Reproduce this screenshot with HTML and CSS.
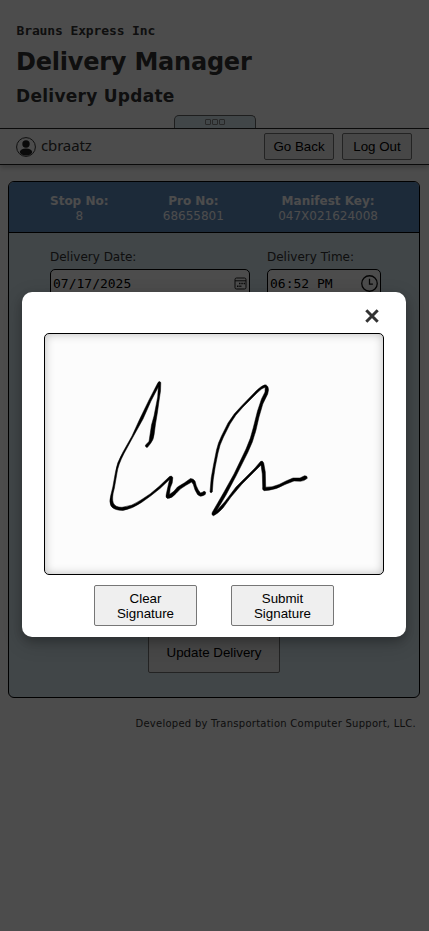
FILE: index.html
```html
<!DOCTYPE html>
<html lang="en">
<head>
<meta charset="utf-8">
<title>Delivery Manager</title>
<link rel="stylesheet" href="styles.css">
</head>
<body>
<header class="header">
  <div class="company"><span>Brauns Express Inc</span></div>
  <h1><span>Delivery Manager</span></h1>
  <h2><span>Delivery Update</span></h2>
  <div class="tab"><i></i><i></i><i></i></div>
</header>
<nav class="bar">
  <svg class="avatar" viewBox="0 0 20 20"><circle cx="10" cy="10" r="9.4" fill="none" stroke="#333"/><circle cx="10" cy="7" r="3.7"/><ellipse cx="10" cy="15" rx="6.2" ry="3.5"/></svg>
  <span class="user">cbraatz</span>
  <button class="btn back">Go Back</button>
  <button class="btn">Log Out</button>
</nav>
<main class="panel">
  <div class="summary">
    <div><b>Stop No:</b><span>8</span></div>
    <div><b>Pro No:</b><span>68655801</span></div>
    <div><b>Manifest Key:</b><span>047X021624008</span></div>
  </div>
  <div class="fields">
    <div class="field date"><label>Delivery Date:</label>
      <div class="input"><span>07/17/2025</span>
        <svg class="cal" viewBox="0 0 13 13" fill="none" stroke="#222"><rect x="1" y="1" width="11" height="11" rx="1.5"/><path d="M1 3.8h11"/><path d="M5 6.5h6M3 9.3h5" stroke-width="1.4" stroke-dasharray="1.5 .8"/></svg>
      </div>
    </div>
    <div class="field time"><label>Delivery Time:</label>
      <div class="input"><span>06:52 PM</span>
        <svg class="clock" viewBox="0 0 16 16" fill="none" stroke="#111" stroke-width="1.2"><circle cx="8" cy="8" r="7.3"/><path d="M8 3.5V8.5H11.2"/></svg>
      </div>
    </div>
  </div>
  <button class="btn update">Update Delivery</button>
</main>
<footer class="footer">Developed by Transportation Computer Support, LLC.</footer>
<div class="overlay">
  <section class="modal">
    <svg class="close" viewBox="0 0 16 16"><path d="M2.3 2.3L13.7 13.7M13.7 2.3L2.3 13.7" stroke="#333" stroke-width="3"/></svg>
    <div class="pad">
      <svg viewBox="45 334 338 240" fill="#000" stroke="#000" stroke-width=".5" stroke-linejoin="round">
        <path d="M145.3 445.2L149 441.5L151.5 425L154 416L157.7 397L158.3 387L151 401L143 419L133 437L124 453.5Q118 465 117 473L114.4 488Q111.5 498 113.3 503Q115.5 507.5 122 507.3Q132 506.5 141 500Q151 494 159 486.5L169.5 476.5Q171.5 475.3 172.8 477.5Q173 483 170.2 488L169.5 494.5Q174 492 177.5 487L184.5 482.8L190.5 478.5Q193.5 478.5 195 481Q196 486 198.3 490L200.5 493L202.5 492.2Q204.5 490.5 205.7 492.3Q206 495 203.5 495.5Q200 497.5 197.5 494.5Q194.5 490 193.3 484.5L191.7 482L186 485.3Q180 488.5 176.5 493Q172 498.5 167.5 498.5Q165.2 498 166.3 494L169.5 479.5L160 488.5Q151 496 141.5 502.5Q132 509 123 510.4Q114 510.5 111 506Q109 502 110.6 496L112.8 487L115.3 473Q116.5 463 123 452L132 436L140 418.5L149 400L158 382.5Q159.5 380.5 160.8 382.5L160.5 391L159 401L157.5 412L155.5 424L154.2 434Q153.5 440 150.7 443.3L147.5 447.3Q145.5 447.8 145.3 445.2Z"/>
        <path d="M210 492L211.2 478L213.5 465L216.5 450Q218 443 221.5 436L228 423Q234 413 242 405.5L256 391Q261 386 265 384.8Q268.3 385 268.5 390L267.7 394L262.8 404L259 417L256 430Q253 442 248 452L236 476L226 495L216.5 511L225 501.5L236 487L244 479L255 468L260.5 461.5Q262.5 460 263.7 463L265.3 472L265.7 487.2Q273 487.3 279 484.5L286 481L293 478L300 478L304.5 475.8Q307.5 475.5 307.3 478.3Q304 481.3 300.5 481.2L294 481L285 484.5Q276 489.5 269 490.2L264 490.7Q262 489.7 262.7 487L262.3 474L261 465L254 472L242 484L231 497L223 508Q217.5 514 213.5 515.7Q211 515.2 212.3 512.3L224 492L234 474L246 449Q251 438 253.2 428L257.5 411L261.5 399L265 392L265.2 387.2Q262 388 257 393L243 407Q235 415 230 424L223.5 437Q219.5 445 218 453L215.2 467L213.2 480L212.3 492Q211 493.6 210 492Z"/>
      </svg>
    </div>
    <div class="actions"><button class="btn">Clear<br>Signature</button><button class="btn">Submit<br>Signature</button></div>
  </section>
</div>
</body>
</html>
```

FILE: styles.css
```css
* { box-sizing: border-box; }
body { margin: 0; height: 931px; overflow: hidden; background: #fff; color: #333; font-family: "DejaVu Sans", sans-serif; }
.header { height: 128px; padding: 0 16px; position: relative; }
.company { padding: 23px 0 0 .5px; height: 43px; font: bold 13px/16px "DejaVu Sans Mono", monospace; letter-spacing: -.12px; }
h1 { margin: 0; font-size: 24px; line-height: 39px; letter-spacing: -.22px; white-space: nowrap; }
h2 { margin: 0; font-size: 17px; line-height: 28px; letter-spacing: .27px; white-space: nowrap; }
.tab { position: absolute; left: 174px; bottom: 0; width: 82px; height: 13px; border: 1px solid #666; border-bottom: 0; border-radius: 5px 5px 0 0; background: #d9e9f0; display: flex; justify-content: center; gap: 1px; padding-top: 3px; }
.tab i { width: 6px; height: 6px; border: 1px solid #888; border-radius: 1px; }
.bar { height: 37px; border: solid #222; border-width: 1px 0; display: flex; align-items: center; padding: 0 17px 0 16px; box-shadow: 0 3px 5px rgba(0,0,0,.2); }
.avatar { width: 20px; height: 20px; fill: #222; }
.user { margin: -3px 0 0 5px; font: 15px "Noto Sans", sans-serif; letter-spacing: -.15px; }
.btn { font: 13.333px/15px "Liberation Sans", Arial, sans-serif; color: #000; background: #efefef; border: 1px solid #767676; border-radius: 2px; padding: 0; }
.bar .btn { width: 70px; height: 27px; }
.bar .back { margin: 0 8px 0 auto; }
.panel { margin: 16px 9px 0 8px; height: 517px; border: 1px solid #000; border-radius: 6px; background: #d9e9f0; overflow: hidden; position: relative; display: flex; flex-direction: column; }
.summary { height: 51px; border-bottom: 1px solid #000; background: #5f8cbf; color: #fff; display: flex; justify-content: space-between; padding: 12px 41px 0; font-size: 12px; line-height: 15px; text-align: center; }
.summary b, .summary span { display: block; }
.fields { display: flex; gap: 17px; padding: 16px 0 0 41px; font-size: 12px; }
.field label { display: block; line-height: 16px; height: 20px; }
.input { height: 29px; border: 1px solid #000; border-radius: 5px; background: #fff; color: #000; display: flex; align-items: center; justify-content: space-between; padding: 0 2px; font: 13px "DejaVu Sans Mono", monospace; }
.date { width: 200px; }
.time { width: 114px; }
.cal { width: 13px; height: 13px; }
.clock { width: 17px; height: 17px; }
.update { width: 132px; height: 41px; margin: auto auto 24px; flex: none; }
.footer { padding: 19px 13px 0 0; text-align: right; font-size: 10px; line-height: 13px; letter-spacing: .255px; }
.overlay { position: absolute; inset: 0; background: rgba(0,0,0,.7); display: flex; align-items: flex-start; justify-content: center; }
.modal { width: 384px; height: 345px; margin-top: 292.4px; margin-right: 1px; border-radius: 10px; background: #fff; padding: 16px 22px 0; box-shadow: 0 4px 8px rgba(0,0,0,.2), 0 6px 20px rgba(0,0,0,.19); }
.close { display: block; width: 16px; height: 16px; margin: 0 4px 9px auto; }
.pad { height: 242px; border: 1px solid #000; border-radius: 5px; background: #fcfcfc; box-shadow: inset 0 0 10px rgba(0,0,0,.25); }
.pad svg { display: block; width: 338px; height: 240px; }
.actions { display: flex; justify-content: center; gap: 34px; padding-top: 10px; }
.actions .btn { width: 103px; height: 41px; }
```
